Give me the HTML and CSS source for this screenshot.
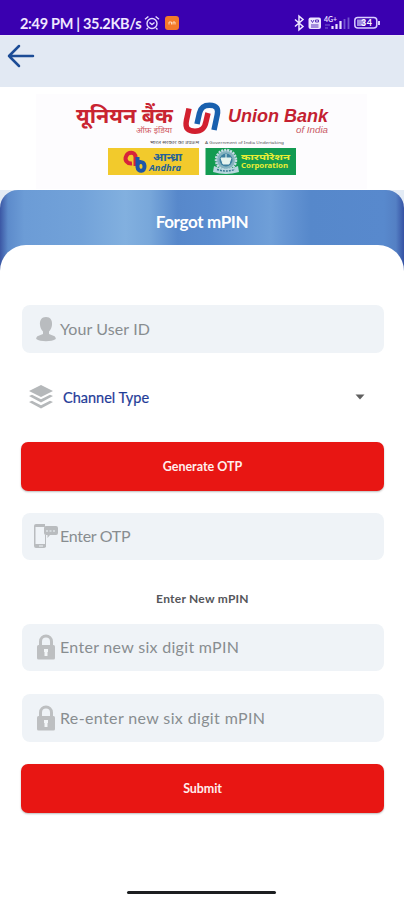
FILE: index.html
```html
<!DOCTYPE html>
<html lang="en">
<head>
<meta charset="utf-8">
<title>Forgot mPIN</title>
<link rel="stylesheet" href="styles.css">
</head>
<body>
<div class="status">
  <span class="clock">2:49 PM | 35.2KB/s</span>
  <svg class="alarm" width="16" height="16" viewBox="0 0 16 16" fill="none" stroke="#e6dcff" stroke-width="1.4"><circle cx="8" cy="8.500" r="5"/><path d="M1 4.300 4.400 1.500M15 4.300 11.600 1.500M5.500 7.500 8 9.500 10.500 7.500M4 13 2.500 14.500M12 13l1.500 1.500"/></svg>
  <svg class="app" width="14" height="14" viewBox="0 0 14 14"><rect width="14" height="14" rx="3" fill="#f47a2a"/><path d="M4 8.500V6h2.500v2.500M8 8.500V6h2v2.500" stroke="#ffd9b8" fill="none"/></svg>
  <svg class="tray" width="90" height="18" viewBox="292 14 90 18">
    <path d="M295 19.500 303 26.500 299 29.800V16.200L303 19.500 295 26.500" fill="none" stroke="#eee6ff" stroke-width="1.500"/>
    <rect x="308.500" y="17.500" width="12.500" height="11.500" rx="2" fill="#eee6ff"/>
    <path d="M311 20l1.500 2.500L314 20M315.500 20h3v2h-3zM311 25h7.500M311 27h7.500" fill="none" stroke="#5b35bd"/>
    <text x="324" y="21.500" class="net" textLength="13">4G+</text>
    <path d="M325 25h5M325 28h3" stroke="#7f60d4"/>
    <path d="M332.500 29v-3M336.500 29v-5M340.500 29v-8" stroke="#e9e1ff" stroke-width="2.200"/>
    <path d="M344.500 29V19M348.500 29V17.500" stroke="#7556cf" stroke-width="1.800"/>
    <rect x="354.800" y="17.500" width="22" height="10.500" rx="3" fill="none" stroke="#d9ceff" stroke-width="1.500"/>
    <rect x="357" y="19.500" width="8" height="6.500" fill="#a18be2"/>
    <path d="M379 21v4" stroke="#d9ceff" stroke-width="2"/>
    <text x="361" y="26" class="bat" textLength="11">34</text>
  </svg>
</div>
<div class="toolbar">
  <svg width="28" height="24" viewBox="0 0 28 24" fill="none" stroke="#1c4c96" stroke-width="2.500" stroke-linecap="round" stroke-linejoin="round"><path d="M26 12H2M12 2 2 12 12 22"/></svg>
</div>
<svg class="logo" width="404" height="103" viewBox="0 87 404 103">
  <rect y="87" width="404" height="103" fill="#fff"/>
  <rect x="36" y="94" width="331" height="95" fill="#fdfcfe"/>
  <text x="76" y="122.500" class="hindi" textLength="97" lengthAdjust="spacingAndGlyphs">यूनियन बैंक</text>
  <text x="136" y="132.500" class="hindi-sub" textLength="36" lengthAdjust="spacingAndGlyphs">ऑफ़ इंडिया</text>
  <g fill="none" stroke-width="5.500">
    <path d="M189 108.500 186.500 120C184.800 128.500 188 131.300 195 131.300C202 131.300 204.800 128 206 121.500L208 113" stroke="#d2202f"/>
    <path d="M197 124 199.500 113C201 107 204 105.300 209.500 105.300C217 105.300 218.500 109 217.200 115L214 130" stroke="#1960ae"/>
  </g>
  <text x="228" y="122" class="bank" textLength="100" lengthAdjust="spacingAndGlyphs">Union Bank</text>
  <text x="296" y="132.500" class="india" textLength="32" lengthAdjust="spacingAndGlyphs">of India</text>
  <text x="150" y="144" class="tiny" textLength="49" lengthAdjust="spacingAndGlyphs">भारत सरकार का उपक्रम</text>
  <text x="205" y="144" class="tiny" textLength="79" lengthAdjust="spacingAndGlyphs">A Government of India Undertaking</text>
  <rect x="108" y="148" width="91" height="27" fill="#f2ca2c"/>
  <g fill="none" stroke-width="4">
    <path d="M132 163.500C127 164 124.500 160 126 156.500C128 151.500 135.500 151.500 135.500 157V166" stroke="#d7233a"/>
    <path d="M137.500 157V167C138 172.500 145 172 144.500 166C144 161 138.500 161 137.500 165" stroke="#1d56a8"/>
  </g>
  <text x="153" y="160.500" class="andhra" textLength="29" lengthAdjust="spacingAndGlyphs">आन्ध्रा</text>
  <text x="149" y="171" class="andhra-en" textLength="32" lengthAdjust="spacingAndGlyphs">Andhra</text>
  <rect x="205.500" y="148" width="90.500" height="27" fill="#139b51"/>
  <circle cx="226" cy="160" r="10" fill="#85b3bf" stroke="#c3dbe3" stroke-width="2.500" stroke-dasharray="2 1"/>
  <circle cx="226" cy="160" r="6.500" fill="#3d80a0"/>
  <path d="M221 158h10l-2 6h-6zM226 154v4" fill="#e6f4ee" stroke="#e6f4ee"/>
  <path d="M214 166q12 6 24 0l1 6q-13 4-26 0z" fill="#b9d7df"/>
  <path d="M217 169.500q9 3 18 0" fill="none" stroke="#3a7b94" stroke-width="1.500" stroke-dasharray="2 1"/>
  <text x="241" y="159.500" class="corp" textLength="49" lengthAdjust="spacingAndGlyphs">कारपोरेशन</text>
  <text x="241" y="168" class="corp-en" textLength="47" lengthAdjust="spacingAndGlyphs">Corporation</text>
</svg>
<div class="sheet">
<div class="hero"><h1>Forgot mPIN</h1></div>
<form class="card">
  <div class="field">
    <svg width="24" height="26" viewBox="0 0 24 26" fill="#b9bcbf"><path d="M12 1C7.500 1 5.500 4.500 6 9c.300 3 1.500 5 3 6.500v2.500L4 20c-1.500.7-1.800 2-1.800 3 4 3 15.500 3 19.600 0 0-1-.3-2.300-1.800-3l-5-2v-2.500c1.500-1.500 2.700-3.500 3-6.500C18.500 4.500 16.500 1 12 1z"/></svg>
    <span class="ph user">Your User ID</span>
  </div>
  <div class="select">
    <svg width="26" height="26" viewBox="0 0 26 26" fill="#b5b8ba"><path d="M13 1 25 7 13 13 1 7zM1 12l3-1.200 9 4.400 9-4.400 3 1.200-12 6.500zM1 18l3-1.200 9 4.400 9-4.400 3 1.200-12 6.500z"/></svg>
    <span class="channel">Channel Type</span>
    <svg class="caret" width="10" height="6" viewBox="0 0 10 6"><path d="M.5.5h9L5 5.500z" fill="#606060"/></svg>
  </div>
  <button type="button" class="btn generate"><span>Generate OTP</span></button>
  <div class="field otp">
    <svg width="26" height="26" viewBox="0 0 26 26" fill="#b9bcbf"><path d="M3 1h9v3H2.500v17H12v-9h1v11q0 2-2 2H3q-2 0-2-2V3q0-2 2-2z"/><path d="M2 21h11v3H2zM13 3h10q2 0 2 2v5q0 2-2 2h-6l-2.500 3v-3H13q-2 0-2-2V5q0-2 2-2z"/><path d="M13 8h10" stroke="#dde2e6" stroke-width="1.500" stroke-dasharray="2 1.500"/><path d="M6 23h4" stroke="#eef3f7"/></svg>
    <span class="ph otptext">Enter OTP</span>
  </div>
  <h2>Enter New mPIN</h2>
  <div class="field pin">
    <svg width="24" height="26" viewBox="0 0 24 26"><path d="M6.500 12V7.500a5.500 5.500 0 0 1 11 0V12" fill="none" stroke="#bdbfc1" stroke-width="3"/><rect x="3" y="11" width="18" height="14.500" rx="1.500" fill="#bdbfc1"/><path d="M12 15v7M10 16.500h4" stroke="#f3f6f8" stroke-width="3"/></svg>
    <span class="ph new">Enter new six digit mPIN</span>
  </div>
  <div class="field again">
    <svg width="24" height="26" viewBox="0 0 24 26"><path d="M6.500 12V7.500a5.500 5.500 0 0 1 11 0V12" fill="none" stroke="#bdbfc1" stroke-width="3"/><rect x="3" y="11" width="18" height="14.500" rx="1.500" fill="#bdbfc1"/><path d="M12 15v7M10 16.500h4" stroke="#f3f6f8" stroke-width="3"/></svg>
    <span class="ph re">Re-enter new six digit mPIN</span>
  </div>
  <button type="button" class="btn submit"><span>Submit</span></button>
  <div class="home"></div>
</form>
</div>
</body>
</html>
```
FILE: styles.css
```css
* { box-sizing: border-box; }
body { margin: 0; width: 404px; height: 900px; overflow: hidden; background: #fff; font-family: Lato, "Noto Sans", sans-serif; }
svg { display: block; flex: none; }
.status { height: 35px; background: #3a00b0; display: flex; align-items: center; padding: 11px 22px 0 20px; color: #efe7ff; }
.clock { font-size: 14.5px; font-weight: 700; width: 122px; white-space: nowrap; letter-spacing: -.3px; }
.alarm { margin-left: 2px; }
.app { margin-left: 5px; }
.tray { margin-left: auto; }
.net { font: 700 7px Lato, sans-serif; fill: #e6ddff; }
.bat { font: 700 9px Lato, sans-serif; fill: #fff; }
.toolbar { height: 52px; background: #e2e9f3; border-top: 1px solid #eceaf8; padding: 8px 7px; }
.logo text { font-family: "Noto Sans", "Noto Sans Devanagari", Lato, sans-serif; font-weight: 700; }
.logo .hindi { font-size: 21px; fill: #c92431; }
.logo .hindi-sub { font-size: 8px; font-weight: 400; fill: #cf5862; }
.logo .bank { font: italic 700 18px "Liberation Sans", sans-serif; fill: #c41f31; }
.logo .india { font: italic 400 9.5px "Liberation Sans", sans-serif; fill: #c95a65; }
.logo .tiny { font-size: 4px; font-weight: 400; fill: #4e4e52; }
.logo .andhra { font-size: 11px; font-style: italic; fill: #246199; }
.logo .andhra-en { font-size: 9px; font-style: italic; fill: #246199; }
.logo .corp { font-size: 8px; fill: #e9ed35; }
.logo .corp-en { font-size: 7.5px; fill: #e9ed35; }
.sheet { background: linear-gradient(#e3ebf5 0, #e3ebf5 30px, #fff 60px); }
.hero { height: 92px; margin-bottom: -37px; border-radius: 18px 18px 0 0; background: linear-gradient(90deg, #3b57a4 0, #5d8bcb 2%, #6c9cd6 6%, #72a2d9 20%, #82b0df 31%, #78a7da 37%, #5788cb 44%, #5a8ccf 52%, #6f9fd8 67%, #6595d3 71%, #5688cb 77%, #5889cd 95%, #5480c4 98%, #3552a4 100%); }
h1 { margin: 0; padding-top: 20px; color: #fff; font-size: 17px; line-height: 23px; text-align: center; letter-spacing: -.35px; }
.card { position: relative; height: 655px; margin: 0; padding: 60px 20px 0 21px; background: #fff; border-radius: 26px 26px 0 0; display: flex; flex-direction: column; }
.field { height: 48px; flex: none; margin: 0 0 0 1px; border-radius: 8px; background: #eff3f7; display: flex; align-items: center; padding: 0 0 1px 12px; }
.ph { color: #888d90; font-size: 16px; line-height: 22px; white-space: nowrap; margin-left: 2px; }
.user { letter-spacing: .1px; }
.new { letter-spacing: .3px; }
.re { letter-spacing: .37px; }
.select { height: 26px; margin: 31px 19px 32px 7px; display: flex; align-items: center; }
.channel { margin-left: 9px; color: #1f3c98; font-size: 14.5px; -webkit-text-stroke: .2px #1f3c98; }
.caret { margin-left: auto; }
.btn { height: 49px; flex: none; border: 0; border-radius: 7px; background: #e81613; color: #ffeeed; font: 700 12.5px Lato, sans-serif; padding: 0; box-shadow: 0 1px 2px #bcbcbc; }
.otp { margin-top: 22px; padding-left: 11px; height: 47px; }
.otptext { margin-left: 1px; letter-spacing: -.3px; }
h2 { margin: 31px 0 17px; font-size: 12px; line-height: 16px; color: #55565a; text-align: center; font-weight: 700; letter-spacing: .25px; }
.pin { height: 47px; }
.again { margin-top: 23px; margin-bottom: 22px; height: 48px; }
.submit span { letter-spacing: -.1px; }
.home { width: 149px; height: 3px; border-radius: 2px; background: #1c1e20; margin: 78px auto 0; position: relative; left: -1px; }
```
